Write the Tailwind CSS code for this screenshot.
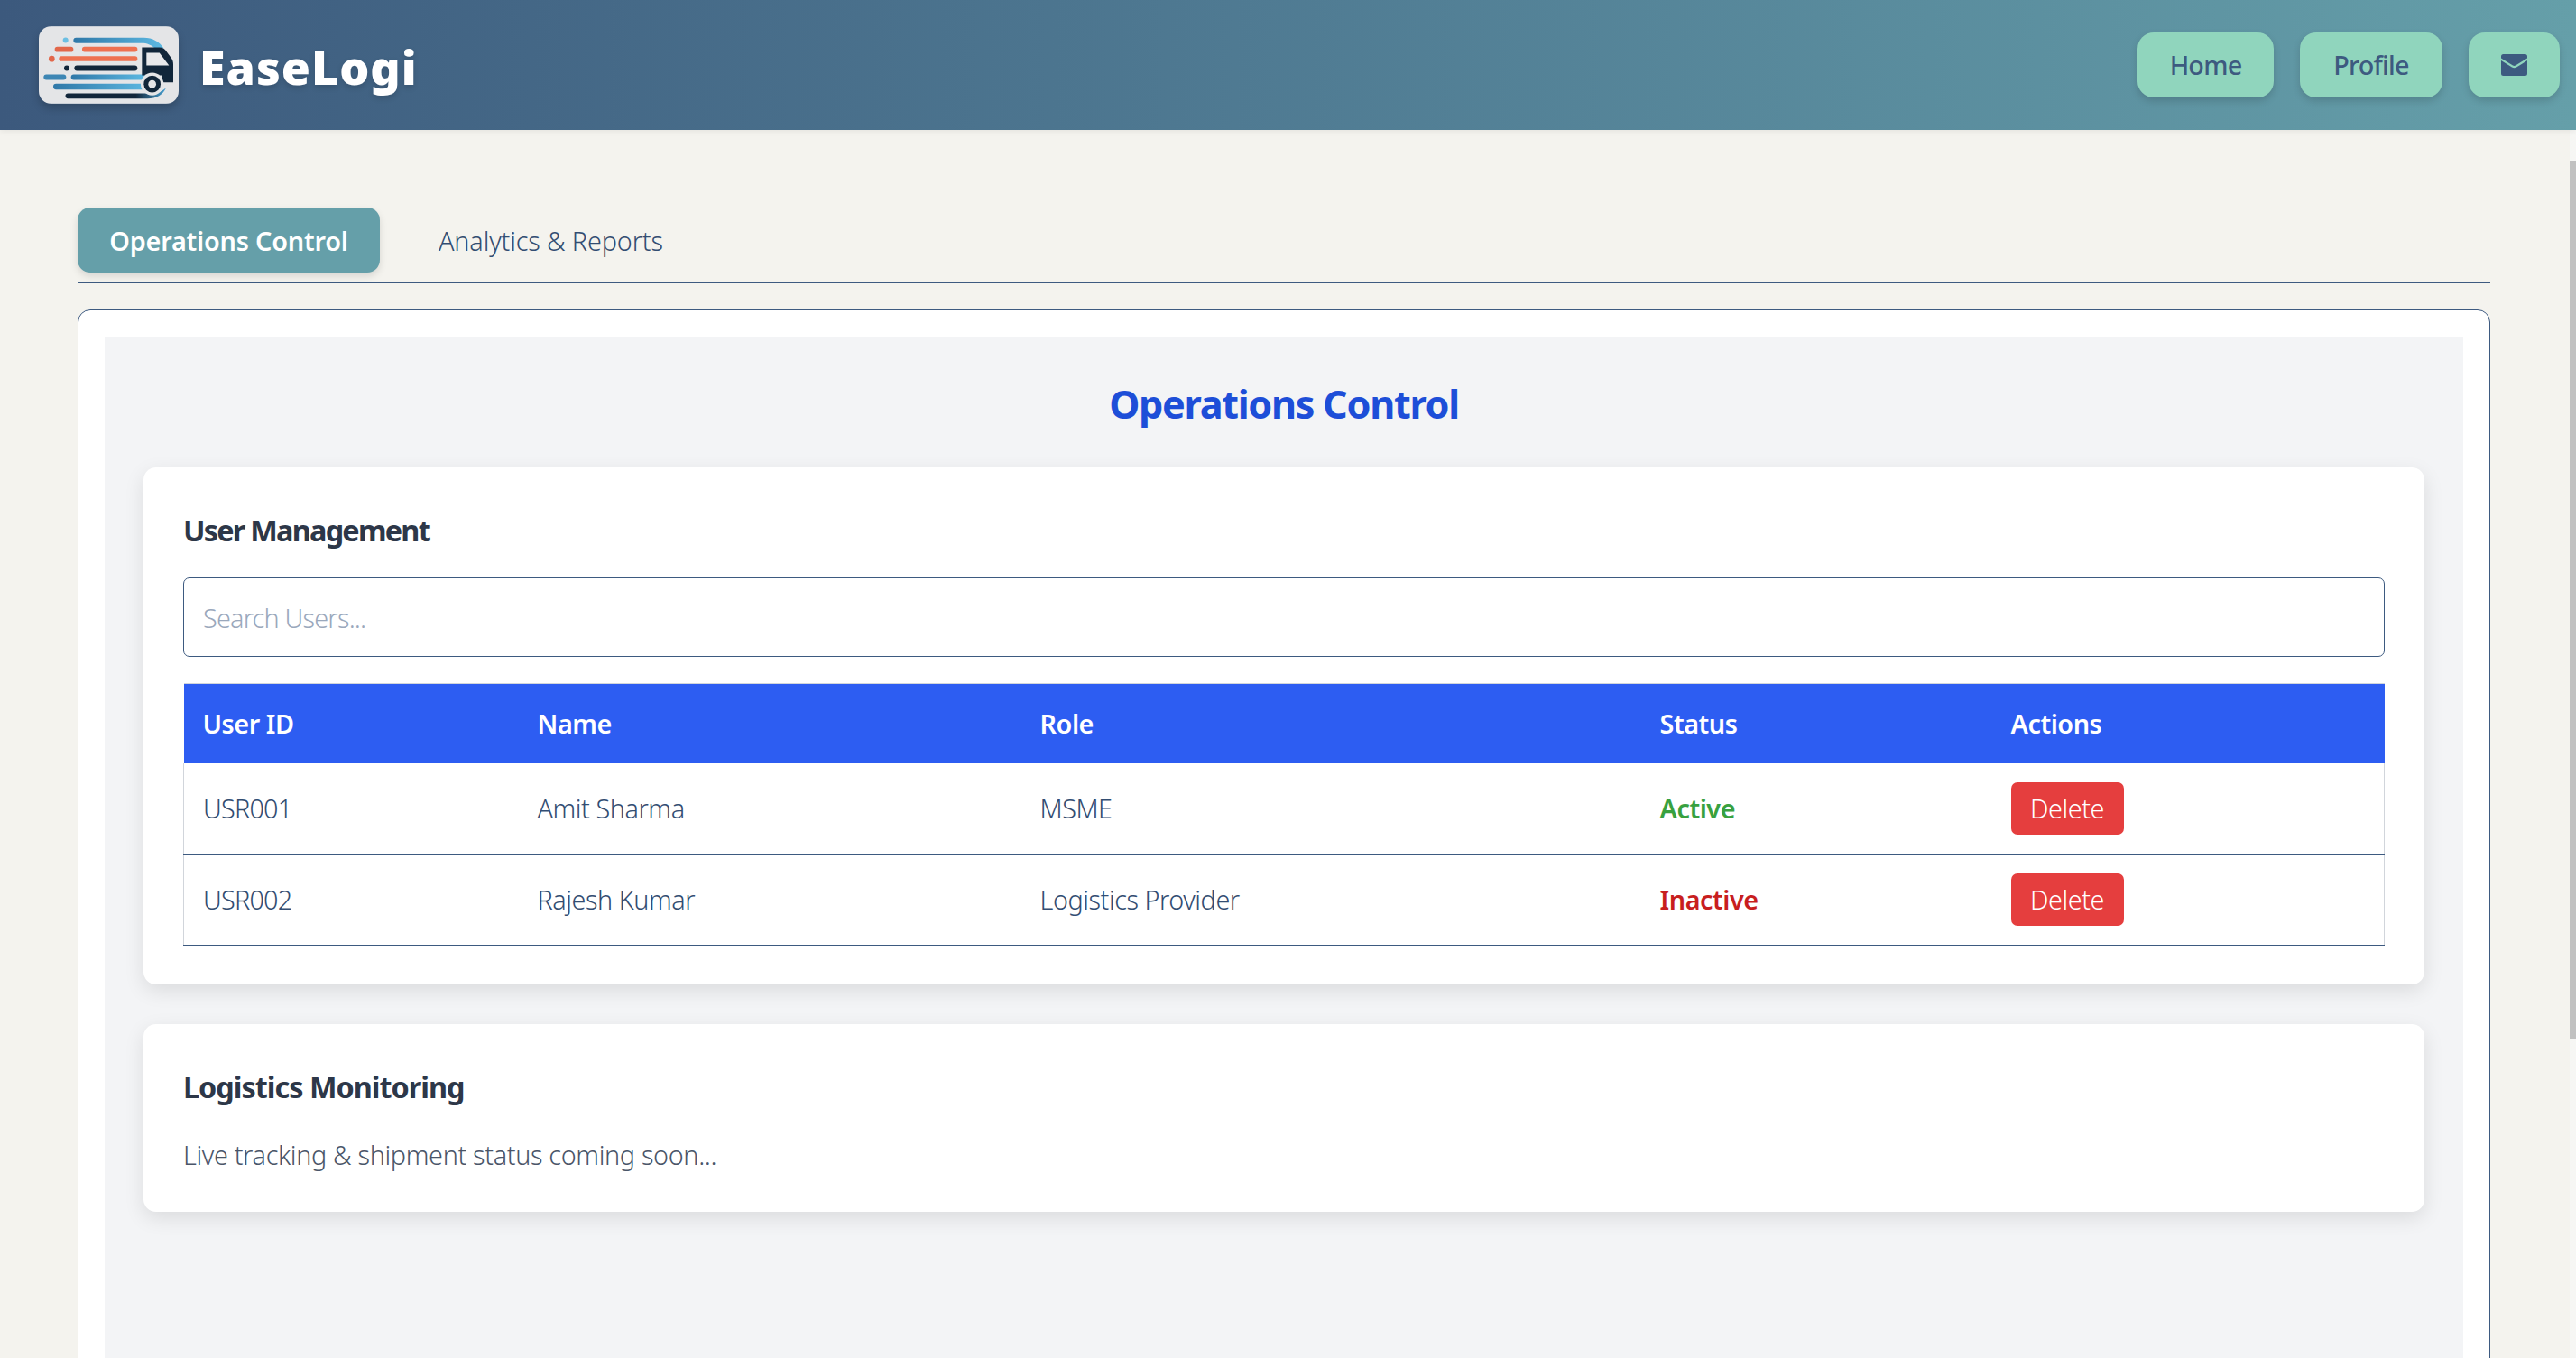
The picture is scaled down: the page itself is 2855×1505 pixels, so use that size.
<!DOCTYPE html>
<html lang="en">
<head>
<meta charset="utf-8">
<title>EaseLogi</title>
<script src="https://cdn.jsdelivr.net/npm/@tailwindcss/browser@4"></script>
</head>
<body class="relative h-screen w-screen overflow-hidden bg-[#f4f3ee] font-['Noto_Sans',sans-serif] font-[350] tracking-[-0.8px] text-[#3d5a80]">
<header class="relative z-10 flex h-[144px] items-center justify-between bg-gradient-to-r from-[#3c597d] to-[#659fa9] pl-[43px] pr-[18px] shadow-[0_2px_6px_rgba(0,0,0,0.06)]">
  <div class="flex items-center gap-[23px]">
    <svg class="block h-[86px] w-[155px] rounded-[14px] shadow-[0_5px_10px_rgba(0,0,0,0.2)]" viewBox="39 42 465 257" aria-label="EaseLogi logo">
      <defs>
        <linearGradient id="b1" x1="0" x2="1"><stop offset="0" stop-color="#2f78a8"/><stop offset="1" stop-color="#5db9e2"/></linearGradient>
        <linearGradient id="b2" x1="0" x2="1"><stop offset="0" stop-color="#11263a"/><stop offset="0.7" stop-color="#11263a"/><stop offset="1" stop-color="#4aa3d4"/></linearGradient>
      </defs>
      <rect x="39" y="42" width="465" height="257" fill="#e4e5e7"/>
      <circle cx="128" cy="88" r="9" fill="#6cbfe3"/>
      <path d="M163 80H388C418 80 440 94 454 114H424C412 104 400 98 380 98H163a9 9 0 0 1 0-18z" fill="url(#b1)"/>
      <rect x="92" y="110" width="62" height="17" rx="8.5" fill="#e2674a"/>
      <rect x="183" y="110" width="184" height="17" rx="8" fill="#ee7150"/>
      <circle cx="82" cy="150" r="10" fill="#e2674a"/>
      <rect x="106" y="141" width="261" height="17" rx="8" fill="#ee7150"/>
      <circle cx="132" cy="181" r="9" fill="#11263a"/>
      <rect x="157" y="172" width="210" height="18" rx="9" fill="#11263a"/>
      <rect x="55" y="202" width="75" height="18" rx="9" fill="#3d86b4"/>
      <rect x="146" y="202" width="250" height="18" rx="9" fill="url(#b1)"/>
      <rect x="87" y="233" width="320" height="19" rx="9.5" fill="url(#b1)"/>
      <path d="M136 265H400C425 265 445 262 462 246C452 270 430 282 400 282H136a8.500 8.500 0 0 1 0-17z" fill="url(#b2)"/>
      <path d="M382 112H440C452 112 458 118 464 126L480 148C484 154 486 160 486 168V228H450V205H382z" fill="#11263a"/>
      <path d="M397 130H440L472 172H397z" fill="#e8e9eb"/>
      <circle cx="416" cy="234" r="38" fill="#e4e5e7"/>
      <circle cx="416" cy="234" r="28" fill="#11263a"/>
      <circle cx="416" cy="234" r="13" fill="#e4e5e7"/>
    </svg>
    <span class="relative top-[2px] text-[52px] leading-none font-black tracking-[1px] text-white [text-shadow:0_3px_6px_rgba(0,0,0,0.15)]">EaseLogi</span>
  </div>
  <nav class="flex items-center gap-[29px] text-[28.8px] font-medium">
    <button class="flex h-[72px] w-[151px] items-center justify-center rounded-[18px] bg-[#90d5bd] shadow-[0_4px_8px_rgba(0,0,0,0.15)]">Home</button>
    <button class="flex h-[72px] w-[158px] items-center justify-center rounded-[18px] bg-[#90d5bd] shadow-[0_4px_8px_rgba(0,0,0,0.15)]">Profile</button>
    <button class="flex h-[72px] w-[101px] items-center justify-center rounded-[18px] bg-[#90d5bd] shadow-[0_4px_8px_rgba(0,0,0,0.15)]" aria-label="Messages">
      <svg class="h-[24px] w-[29px]" viewBox="0 0 29 24"><path d="M2.500 0H26.500A2.500 2.500 0 0 1 29 2.500V4.500L16 12.500Q14.500 13.400 13 12.500L0 4.500V2.500A2.500 2.500 0 0 1 2.500 0z" fill="#3d5a80"/><path d="M0 7L12 14.500Q14.500 16 17 14.500L29 7V21.500A2.500 2.500 0 0 1 26.500 24H2.500A2.500 2.500 0 0 1 0 21.500z" fill="#3d5a80"/></svg>
    </button>
  </nav>
</header>

<main class="pl-[86px] pr-[95px] pt-[86px]">
  <div class="flex h-[84px] items-start gap-[65px] border-b border-[#3d5a80]">
    <button class="flex h-[72px] w-[335px] items-center justify-center rounded-[14px] bg-[#659fa9] pt-[2px] text-[28.8px] font-semibold tracking-[-0.2px] text-white shadow-[0_4px_8px_rgba(0,0,0,0.12)]">Operations Control</button>
    <button class="flex h-[72px] items-center justify-center pt-[2px] text-[28.8px] tracking-[-0.15px] text-[#324d72]">Analytics &amp; Reports</button>
  </div>

  <section class="mt-[29px] h-[1400px] rounded-[14px] border border-[#3d5a80] bg-white p-[29px]">
    <div class="h-full bg-[#f3f4f6] px-[43px] pt-[43px]">
      <h1 class="text-center text-[43.200px] leading-[64px] font-bold tracking-[-1.300px] text-[#1d4ed8]">Operations Control</h1>
      <div class="mt-[38px] h-[573px] rounded-[14px] bg-white p-[44px] shadow-[0_7px_22px_rgba(0,0,0,0.1)]">
        <h2 class="text-[32.400px] leading-[50px] font-bold tracking-[-1.750px] text-[#2d3748]">User Management</h2>
        <div class="mt-[28px] flex h-[88px] items-center rounded-[7px] border border-[#3d5a80] pl-[21px] pt-[2px] text-[28.8px] text-[#9aa8bc]">Search Users...</div>
        <table class="mt-[29px] w-full table-fixed border-collapse text-left text-[28.8px] tracking-[-0.45px] text-[#324d72]">
          <thead class="bg-[#2d5df2] text-white">
            <tr class="h-[88px] border-t border-[#d1d5db]"><th class="w-[370px] pl-[21px] font-semibold">User ID</th><th class="w-[557px] pl-[22px] font-semibold">Name</th><th class="w-[687px] pl-[22px] font-semibold">Role</th><th class="w-[390px] pl-[22px] font-semibold">Status</th><th class="pl-[21px] font-semibold">Actions</th></tr>
          </thead>
          <tbody>
            <tr class="h-[101px] border-x border-b border-x-[#d1d5db] border-b-[#3d5a80]"><td class="pl-[21px] tracking-[-0.8px]">USR001</td><td class="pl-[22px]">Amit Sharma</td><td class="pl-[22px]">MSME</td><td class="pl-[22px] font-semibold text-[#38a13f]">Active</td><td class="pl-[21px]"><button class="h-[58px] w-[125px] rounded-[7px] bg-[#e53e3e] text-white">Delete</button></td></tr>
            <tr class="h-[101px] border-x border-b border-x-[#d1d5db] border-b-[#3d5a80]"><td class="pl-[21px] tracking-[-0.8px]">USR002</td><td class="pl-[22px]">Rajesh Kumar</td><td class="pl-[22px]">Logistics Provider</td><td class="pl-[22px] font-semibold text-[#c81e1e]">Inactive</td><td class="pl-[21px]"><button class="h-[58px] w-[125px] rounded-[7px] bg-[#e53e3e] text-white">Delete</button></td></tr>
          </tbody>
        </table>
      </div>
      <div class="mt-[44px] h-[208px] rounded-[14px] bg-white p-[44px] shadow-[0_7px_22px_rgba(0,0,0,0.1)]">
        <h2 class="text-[32.400px] leading-[50px] font-bold tracking-[-1px] text-[#2d3748]">Logistics Monitoring</h2>
        <p class="mt-[31px] text-[28.8px] leading-[40px] tracking-[-0.35px] text-[#4a5568]">Live tracking &amp; shipment status coming soon...</p>
      </div>
    </div>
  </section>
</main>

<div class="absolute right-0 top-[144px] bottom-0 w-[7px] bg-[#f6f6f4]"><div class="mt-[34px] h-[974px] w-full bg-[#c1c1c1]"></div></div>
</body>
</html>
